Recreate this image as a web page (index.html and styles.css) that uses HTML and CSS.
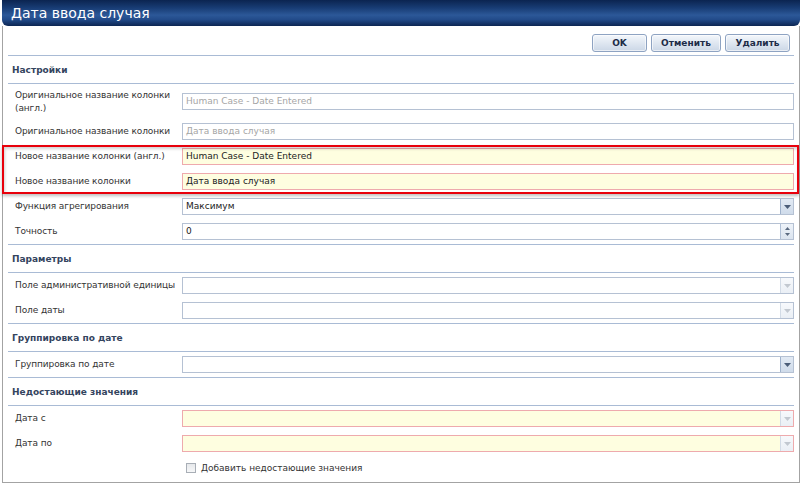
FILE: index.html
```html
<!DOCTYPE html>
<html>
<head>
<meta charset="utf-8">
<link rel="stylesheet" href="styles.css">
</head>
<body>
<div class="dialog">
  <div class="titlebar">Дата ввода случая</div>
  <div class="body">
    <div class="toolbar">
      <button class="btn btn-ok">OK</button>
      <button class="btn btn-cancel">Отменить</button>
      <button class="btn btn-delete">Удалить</button>
    </div>

    <div class="section-head">Настройки</div>
    <div class="row row-tall">
      <div class="label">Оригинальное название колонки<br>(англ.)</div>
      <div class="field"><span class="value placeholder">Human Case - Date Entered</span></div>
    </div>
    <div class="row">
      <div class="label">Оригинальное название колонки</div>
      <div class="field"><span class="value placeholder">Дата ввода случая</span></div>
    </div>
    <div class="highlight">
      <div class="row">
        <div class="label">Новое название колонки (англ.)</div>
        <div class="field required"><span class="value">Human Case - Date Entered</span></div>
      </div>
      <div class="row">
        <div class="label">Новое название колонки</div>
        <div class="field required"><span class="value">Дата ввода случая</span></div>
      </div>
    </div>
    <div class="row">
      <div class="label">Функция агрегирования</div>
      <div class="field"><span class="value">Максимум</span><span class="drop active"><svg width="7" height="4" viewBox="0 0 7 4"><path d="M0 0h7L3.5 4z" fill="#4b5d78"/></svg></span></div>
    </div>
    <div class="row">
      <div class="label">Точность</div>
      <div class="field"><span class="value">0</span><span class="drop spin"><svg width="5" height="3" viewBox="0 0 5 3"><path d="M0 3h5L2.5 0z" fill="#5a6a80"/></svg><svg width="5" height="3" viewBox="0 0 5 3"><path d="M0 0h5L2.5 3z" fill="#5a6a80"/></svg></span></div>
    </div>

    <div class="section-head">Параметры</div>
    <div class="row">
      <div class="label">Поле административной единицы</div>
      <div class="field"><span class="value"></span><span class="drop"><svg width="7" height="4" viewBox="0 0 7 4"><path d="M0 0h7L3.5 4z" fill="#c2c8d0"/></svg></span></div>
    </div>
    <div class="row">
      <div class="label">Поле даты</div>
      <div class="field"><span class="value"></span><span class="drop"><svg width="7" height="4" viewBox="0 0 7 4"><path d="M0 0h7L3.5 4z" fill="#c2c8d0"/></svg></span></div>
    </div>

    <div class="section-head">Группировка по дате</div>
    <div class="row">
      <div class="label">Группировка по дате</div>
      <div class="field"><span class="value"></span><span class="drop active"><svg width="7" height="4" viewBox="0 0 7 4"><path d="M0 0h7L3.5 4z" fill="#4b5d78"/></svg></span></div>
    </div>

    <div class="section-head">Недостающие значения</div>
    <div class="row">
      <div class="label">Дата с</div>
      <div class="field required"><span class="value"></span><span class="drop"><svg width="7" height="4" viewBox="0 0 7 4"><path d="M0 0h7L3.5 4z" fill="#c2c8d0"/></svg></span></div>
    </div>
    <div class="row">
      <div class="label">Дата по</div>
      <div class="field required"><span class="value"></span><span class="drop"><svg width="7" height="4" viewBox="0 0 7 4"><path d="M0 0h7L3.5 4z" fill="#c2c8d0"/></svg></span></div>
    </div>
    <div class="check-row">
      <span class="checkbox"></span>
      <span class="check-label">Добавить недостающие значения</span>
    </div>
  </div>
</div>
</body>
</html>
```

FILE: styles.css
```css
* { box-sizing: border-box; }
html, body { margin: 0; padding: 0; background: #ffffff; }
body {
  font-family: "DejaVu Sans", Verdana, sans-serif;
  font-size: 9px;
  color: #333;
  width: 800px;
  height: 485px;
  overflow: hidden;
}
.dialog {
  margin-left: 2px;
  width: 798px;
}
.titlebar {
  height: 26px;
  line-height: 26px;
  padding-left: 9px;
  color: #fff;
  font-size: 14px;
  border-radius: 0 0 6px 6px;
  background: linear-gradient(#0b2450 0%, #183c74 30%, #2c5898 58%, #224b8a 75%, #0c2653 100%);
}
.body {
  height: 457px;
  border: 1px solid #a3a3a3;
  border-top: 0;
  padding: 0 5px 0 5px;
}
.toolbar {
  height: 29px;
  display: flex;
  justify-content: flex-end;
  align-items: flex-start;
  gap: 4px;
  padding-top: 8px;
  padding-right: 4px;
}
.btn {
  height: 18px;
  padding: 0;
  font-family: "DejaVu Sans", Verdana, sans-serif;
  font-weight: bold;
  font-size: 9px;
  color: #1d2c48;
  border: 1px solid #8ea3c2;
  border-radius: 3px;
  background: linear-gradient(#f4f7fb 0%, #dfe7f1 50%, #cbd7e6 100%);
  box-shadow: inset 0 0 0 1px rgba(255,255,255,.6);
}
.btn-ok { width: 55px; }
.btn-cancel { width: 70px; }
.btn-delete { width: 65px; }
.section-head {
  height: 29px;
  border-top: 1px solid #a9bbd5;
  border-bottom: 1px solid #a9bbd5;
  display: flex;
  align-items: center;
  padding-left: 4px;
  font-weight: bold;
  color: #34445e;
}
.row {
  height: 25px;
  display: flex;
  align-items: center;
}
.row-tall { height: 35px; }
.label {
  width: 174px;
  flex: none;
  padding-left: 7px;
  line-height: 13px;
  color: #333;
  letter-spacing: -0.1px;
}
.field {
  flex: 1;
  height: 17px;
  display: flex;
  align-items: stretch;
  border: 1px solid #b5c1d3;
  background: #fff;
}
.field.required {
  background: #fefee0;
  border-color: #eeaaad;
}
.value {
  flex: 1;
  padding-left: 3px;
  line-height: 15px;
  color: #222;
  white-space: nowrap;
}
.value.placeholder { color: #a5a5a5; }
.drop {
  width: 13px;
  flex: none;
  display: flex;
  align-items: center;
  justify-content: center;
  border-left: 1px solid #d2dbe6;
  background: linear-gradient(#f7f9fc, #eaeff5);
}
.drop.active {
  border-left-color: #9fb2cc;
  background: linear-gradient(#e2eaf4, #cfdbea);
}
.drop.spin {
  flex-direction: column;
  gap: 3px;
  border-left-color: #b0c0d6;
  background: linear-gradient(#eef3f9, #dbe4ef);
}
.highlight {
  position: relative;
}
.highlight::after {
  content: "";
  position: absolute;
  left: -6px;
  right: -5px;
  top: 1px;
  bottom: 0;
  border: 2px solid #e8000b;
  box-shadow: inset 1px 2px 3px rgba(0,0,0,.18), 0 2px 3px rgba(0,0,0,.25);
  pointer-events: none;
}
.check-row {
  display: flex;
  align-items: center;
  height: 24px;
  padding-left: 178px;
  gap: 5px;
}
.checkbox {
  width: 10px;
  height: 10px;
  border: 1px solid #a8aeb6;
  background: linear-gradient(#e6e8eb, #f6f7f8);
}
.check-label { color: #333; }
```
